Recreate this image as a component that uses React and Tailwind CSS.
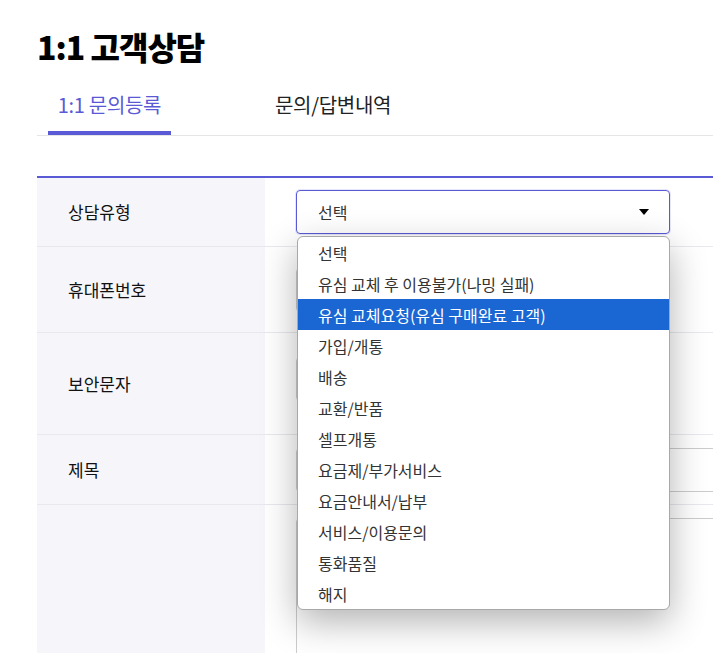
import React from "react";

const options = [
  "선택",
  "유심 교체 후 이용불가(나밍 실패)",
  "유심 교체요청(유심 구매완료 고객)",
  "가입/개통",
  "배송",
  "교환/반품",
  "셀프개통",
  "요금제/부가서비스",
  "요금안내서/납부",
  "서비스/이용문의",
  "통화품질",
  "해지",
];

function Row({ label, h, children, last }) {
  return (
    <div className={`flex ${last ? "" : "border-b border-[#e8e8ee]"}`} style={{ height: h }}>
      <div className="w-[228px] shrink-0 bg-[#f6f6fa] flex items-center pl-[31px] text-[17px] text-[#111]">
        {label}
      </div>
      <div className="flex-1 pl-[31px] relative">{children}</div>
    </div>
  );
}

export default function App() {
  return (
    <div
      className="w-[713px] h-[653px] overflow-hidden bg-white relative"
      style={{ fontFamily: '"Noto Sans CJK KR", "Noto Sans", sans-serif' }}
    >
      <div className="w-[1000px] ml-[37px]">
        <h1 className="pt-[22px] h-[72px] text-[32px] font-black tracking-[-1px] text-black leading-[48px]">
          1:1 고객상담
        </h1>
        <div className="flex h-[64px] border-b border-[#e5e5e5]">
          <div className="ml-[11px] w-[123px] flex flex-col">
            <div className="flex-1 flex items-center justify-center text-[20px] text-[#5a5ad6] tracking-[-0.3px] pt-[6px]">
              1:1 문의등록
            </div>
            <div className="h-[4px] bg-[#5a5ad6]" />
          </div>
          <div className="ml-[94px] px-[10px] flex items-center text-[20px] text-[#222] tracking-[-0.3px] pb-[4px] pt-[6px]">
            문의/답변내역
          </div>
        </div>
        <div className="mt-[40px] h-[2px] bg-[#5a5ad6]" />
        <div>
          <Row label="상담유형" h={69}>
            <div className="pt-[12px]">
              <div className="w-[374px] h-[44px] rounded-[4px] border border-[#5a5ad6] shadow-[0_0_0_1px_rgba(90,90,214,0.15)] flex items-center justify-between pl-[21px] pr-[20px] text-[16px] text-[#333]">
                <span>선택</span>
                <svg width="10" height="6" viewBox="0 0 10 6">
                  <path d="M0 0 L10 0 L5 6 Z" fill="#000" />
                </svg>
              </div>
            </div>
            <div className="absolute left-[32px] top-[58px] z-10 w-[373px] bg-white rounded-[6px] border border-[#a8a8a8] shadow-[0_12px_36px_rgba(0,0,0,0.3)] overflow-hidden">
              {options.map((o, i) => (
                <div
                  key={o}
                  className={`h-[31px] flex items-center pl-[20px] text-[16px] ${
                    i === 2 ? "bg-[#1a66d2] text-white" : "text-[#333]"
                  }`}
                >
                  {o}
                </div>
              ))}
            </div>
          </Row>
          <Row label="휴대폰번호" h={86}>
            <div className="pt-[21px]">
              <div className="w-[374px] h-[44px] border border-[#ccc] rounded-[4px]" />
            </div>
          </Row>
          <Row label="보안문자" h={102}>
            <div className="pt-[24px]">
              <div className="w-[374px] h-[44px] border border-[#ccc] rounded-[4px]" />
            </div>
          </Row>
          <Row label="제목" h={70}>
            <div className="pt-[13px]">
              <div className="w-full h-[44px] border border-[#ccc] rounded-[4px]" />
            </div>
          </Row>
          <Row label="" h={360} last>
            <div className="pt-[13px]">
              <div className="w-full h-[300px] border border-[#ccc] rounded-[4px]" />
            </div>
          </Row>
        </div>
      </div>
    </div>
  );
}
